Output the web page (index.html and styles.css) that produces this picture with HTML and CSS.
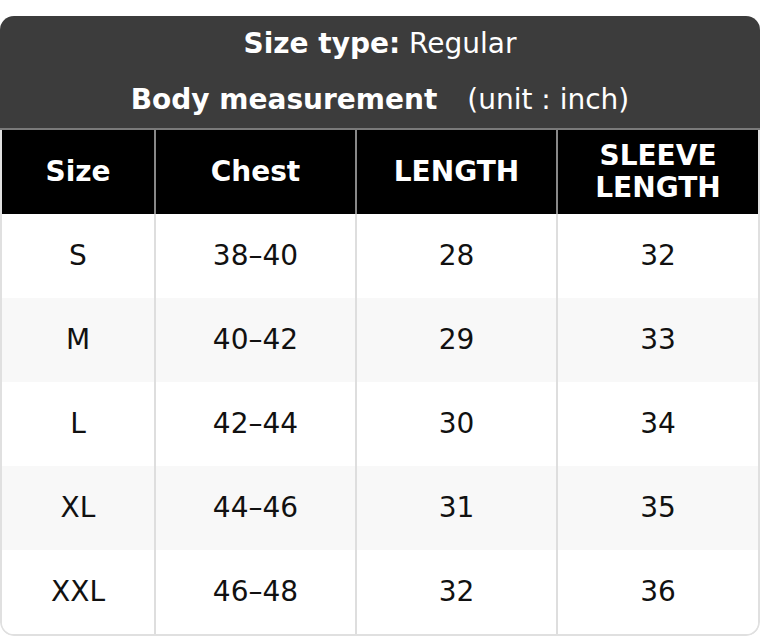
FILE: index.html
```html
<!DOCTYPE html>
<html lang="en">
<head>
<meta charset="utf-8">
<title>Size chart</title>
<link rel="stylesheet" href="styles.css">
</head>
<body>
<div class="card">
  <div class="title">
    <div class="title-line"><b>Size type:</b> Regular</div>
    <div class="title-line"><b>Body measurement</b><span class="unit">(unit : inch)</span></div>
  </div>
  <div class="table">
    <div class="row head">
      <div class="cell">Size</div>
      <div class="cell">Chest</div>
      <div class="cell">LENGTH</div>
      <div class="cell">SLEEVE<br>LENGTH</div>
    </div>
    <div class="row">
      <div class="cell">S</div><div class="cell">38–40</div><div class="cell">28</div><div class="cell">32</div>
    </div>
    <div class="row alt">
      <div class="cell">M</div><div class="cell">40–42</div><div class="cell">29</div><div class="cell">33</div>
    </div>
    <div class="row">
      <div class="cell">L</div><div class="cell">42–44</div><div class="cell">30</div><div class="cell">34</div>
    </div>
    <div class="row alt">
      <div class="cell">XL</div><div class="cell">44–46</div><div class="cell">31</div><div class="cell">35</div>
    </div>
    <div class="row">
      <div class="cell">XXL</div><div class="cell">46–48</div><div class="cell">32</div><div class="cell">36</div>
    </div>
  </div>
</div>
</body>
</html>
```
FILE: styles.css
```css
* { box-sizing: border-box; }
html, body { margin: 0; padding: 0; background: #fff; }
body {
  padding-top: 16px;
  font-family: "DejaVu Sans", "Liberation Sans", sans-serif;
  font-size: 28px;
  color: #111;
}
.card {
  width: 760px;
  border-radius: 14px;
  overflow: hidden;
}
.title {
  background: #3c3c3c;
  color: #fff;
  padding: 8px 0 8px;
  display: flex;
  flex-direction: column;
  gap: 16px;
  text-align: center;
  border-bottom: 2px solid #7a7a7a;
}
.title-line { line-height: 40px; }
.title b { font-weight: bold; }
.unit { margin-left: 30px; }
.table {
  border: 2px solid #e0e0e0;
  border-top: none;
  border-radius: 0 0 14px 14px;
  overflow: hidden;
}
.row {
  display: grid;
  grid-template-columns: 152px 201px 201px 1fr;
  height: 84px;
  background: #fff;
}
.row.alt { background: #f8f8f8; }
.cell {
  display: flex;
  align-items: center;
  justify-content: center;
  text-align: center;
  line-height: 32px;
}
.cell + .cell { border-left: 2px solid #dedede; }
.row.head {
  background: #000;
  color: #fff;
  font-weight: bold;
}
.row.head .cell + .cell { border-left-color: #888; }
```
